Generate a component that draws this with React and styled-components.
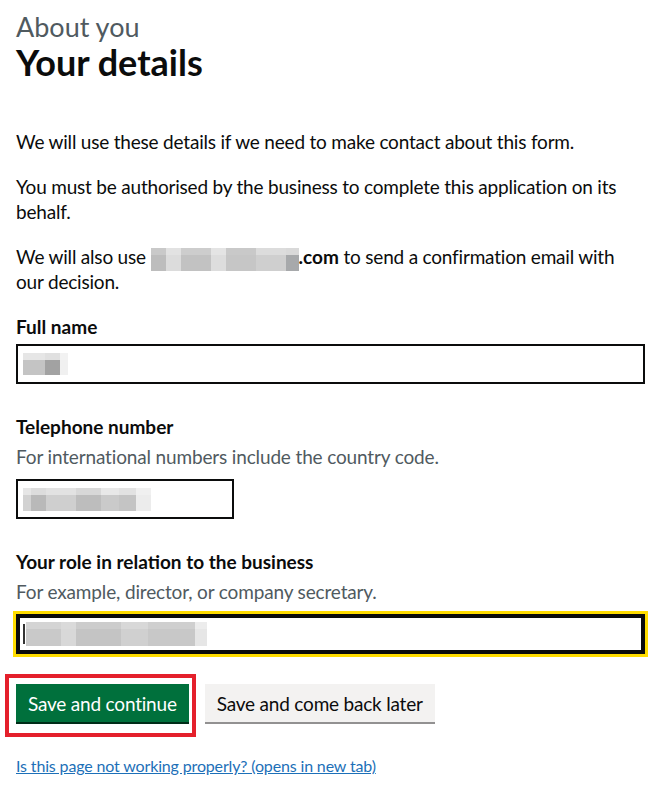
import styled, { createGlobalStyle, css } from "styled-components"

const GlobalStyle = createGlobalStyle`
  body {
    margin: 0;
    background: #fff;
    color: #0b0c0c;
    font-family: Lato, "Noto Sans", Arial, sans-serif;
  }
`

const Page = styled.main`
  padding: 12px 14px 20px 16px;
`

const Caption = styled.span`
  display: block;
  font-size: 27px;
  line-height: 30px;
  color: #505a5f;
`

const Heading = styled.h1`
  margin: 0 0 47px;
  font-size: 36px;
  line-height: 40px;
  font-weight: 700;
`

const Body = styled.p`
  margin: 0 0 20px;
  font-size: 19px;
  line-height: 25px;
  letter-spacing: -0.2px;
`

const Strong = styled.strong`
  font-weight: 700;
  letter-spacing: 0;
`

const FormGroup = styled.div`
  margin-bottom: 30px;
`

const Label = styled.label`
  display: block;
  margin-bottom: 5px;
  font-size: 19px;
  line-height: 25px;
  font-weight: 700;
`

const Hint = styled.div`
  margin-bottom: 10px;
  font-size: 19px;
  line-height: 25px;
  letter-spacing: -0.15px;
  color: #505a5f;
`

const Field = styled.div`
  box-sizing: border-box;
  display: flex;
  align-items: center;
  width: ${(p) => p.$width || "100%"};
  height: 40px;
  padding: 0 5px;
  border: 2px solid #0b0c0c;
  background: #fff;
  ${(p) =>
    p.$focused &&
    css`
      outline: 3px solid #ffdd00;
      box-shadow: inset 0 0 0 2px #0b0c0c;
    `}
`

const Redacted = styled.span`
  display: inline-flex;
  vertical-align: middle;
  height: ${(p) => p.$h}px;
  margin: ${(p) => (p.$inline ? "-5px 0" : "0")};
`

const Cell = styled.span`
  display: block;
  width: ${(p) => p.$w}px;
  height: 100%;
  background: linear-gradient(
    ${(p) => p.$top} 0 30%,
    ${(p) => p.$bottom} 30% 100%
  );
`

const Caret = styled.span`
  display: block;
  width: 2px;
  height: 20px;
  margin-right: 1px;
  background: #333;
  align-self: center;
`

const Buttons = styled.div`
  display: flex;
  gap: 16px;
  margin-bottom: 34px;
`

const Button = styled.button`
  box-sizing: border-box;
  position: relative;
  margin: 0;
  padding: 8px 10px 7px;
  border: 2px solid transparent;
  border-radius: 0;
  font-family: inherit;
  font-size: 19px;
  line-height: 1;
  letter-spacing: -0.2px;
  color: ${(p) => (p.$secondary ? "#0b0c0c" : "#fff")};
  background: ${(p) => (p.$secondary ? "#f3f2f1" : "#00703c")};
  box-shadow: 0 2px 0 ${(p) => (p.$secondary ? "#929191" : "#002d18")};
  cursor: pointer;
  ${(p) =>
    p.$highlighted &&
    css`
      &::after {
        content: "";
        position: absolute;
        top: -12px;
        left: -13px;
        right: -9px;
        bottom: -17px;
        border: 4px solid #e4202b;
        pointer-events: none;
      }
    `}
`

const FooterLink = styled.a`
  font-size: 16px;
  line-height: 20px;
  letter-spacing: -0.15px;
  color: #1d70b8;
  text-decoration: underline;
`

const emailCells = [
  [15, "#c9c9c9", "#bdbdbd"],
  [15, "#e2e2e2", "#dcdcdc"],
  [30, "#cdcdcd", "#c2c2c2"],
  [15, "#e4e4e4", "#dddddd"],
  [30, "#c9c9c9", "#c6c6c6"],
  [30, "#dcdcdc", "#cfcfcf"],
  [13, "#d9d9d9", "#a7a9ab"],
]

const nameCells = [
  [22, "#e6e6e6", "#c4c4c4"],
  [15, "#e0e0e0", "#a2a2a2"],
  [8, "#f2f2f2", "#f0f0f0"],
]

const phoneCells = [
  [8, "#e6e6e6", "#d2d2d2"],
  [15, "#dcdcdc", "#b9b9b9"],
  [30, "#e2e2e2", "#cfcfcf"],
  [25, "#d8d8d8", "#bdbdbd"],
  [18, "#e8e8e8", "#cacaca"],
  [17, "#e2e2e2", "#c4c4c4"],
  [15, "#f0f0f0", "#ececec"],
]

const roleCells = [
  [35, "#d4d4d4", "#c9c9c9"],
  [15, "#dadada", "#d8d8d8"],
  [45, "#cccccc", "#c4c4c4"],
  [27, "#d8d8d8", "#d0d0d0"],
  [47, "#cfcfcf", "#c8c8c8"],
  [12, "#ececec", "#e6e6e6"],
]

function Blur({ cells, h, inline }) {
  return (
    <Redacted $h={h} $inline={inline}>
      {cells.map(([w, top, bottom], i) => (
        <Cell key={i} $w={w} $top={top} $bottom={bottom} />
      ))}
    </Redacted>
  )
}

export default function App() {
  return (
    <>
      <GlobalStyle />
      <Page>
        <Caption>About you</Caption>
        <Heading>Your details</Heading>

        <Body>We will use these details if we need to make contact about this form.</Body>
        <Body>
          You must be authorised by the business to complete this application on its behalf.
        </Body>
        <Body>
          We will also use <Blur cells={emailCells} h={23} inline />
          <Strong>.com</Strong> to send a confirmation email with our decision.
        </Body>

        <FormGroup>
          <Label>Full name</Label>
          <Field>
            <Blur cells={nameCells} h={22} />
          </Field>
        </FormGroup>

        <FormGroup>
          <Label>Telephone number</Label>
          <Hint>For international numbers include the country code.</Hint>
          <Field $width="218px">
            <Blur cells={phoneCells} h={23} />
          </Field>
        </FormGroup>

        <FormGroup>
          <Label>Your role in relation to the business</Label>
          <Hint>For example, director, or company secretary.</Hint>
          <Field $focused>
            <Caret />
            <Blur cells={roleCells} h={24} />
          </Field>
        </FormGroup>

        <Buttons>
          <Button $highlighted>Save and continue</Button>
          <Button $secondary>Save and come back later</Button>
        </Buttons>

        <FooterLink href="#">Is this page not working properly? (opens in new tab)</FooterLink>
      </Page>
    </>
  )
}
